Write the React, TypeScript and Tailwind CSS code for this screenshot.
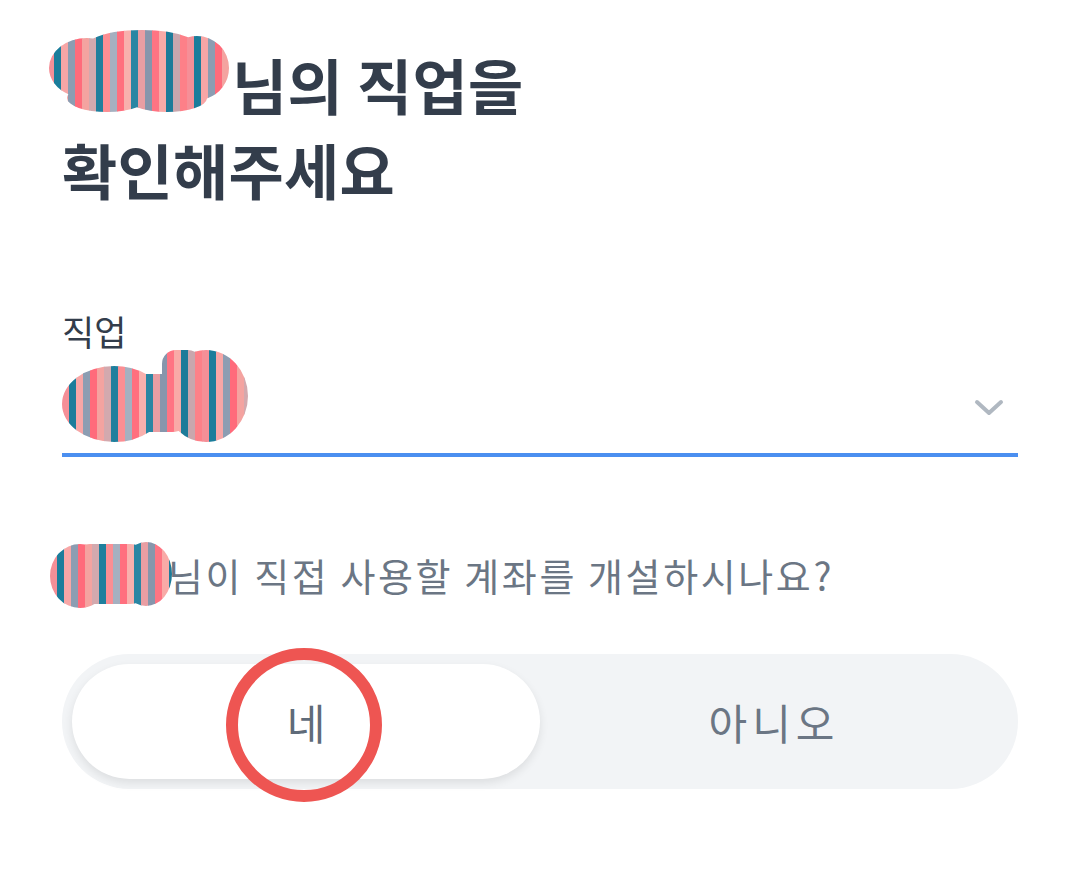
import React from "react";

const STRIPES = [
  "#f58f97", "#1b7d9b", "#f7a6a6", "#8c9db2", "#ff6b7b", "#f4a3a0", "#d3a9ae",
  "#1f7f9d", "#fb8e93", "#a5b0c0", "#ff6f7e", "#f8b0ad", "#2a86a3", "#e99ea3",
  "#8796ac", "#ff7483", "#f9aaa7", "#1d7b99", "#c9a6ad", "#fd8088",
];

function Scribble({ id, w, h, shape }: { id: string; w: number; h: number; shape: React.ReactNode }) {
  const n = Math.ceil(w / 7) + 1;
  return (
    <svg width={w} height={h} viewBox={`0 0 ${w} ${h}`} className="block">
      <defs>
        <clipPath id={id}>{shape}</clipPath>
      </defs>
      <g clipPath={`url(#${id})`}>
        {Array.from({ length: n }).map((_, i) => (
          <rect key={i} x={i * 7} y={0} width={7.5} height={h} fill={STRIPES[i % STRIPES.length]} />
        ))}
      </g>
    </svg>
  );
}

export default function App() {
  return (
    <div
      className="w-[1076px] h-[895px] bg-white overflow-hidden pl-[62px] pr-[58px]"
      style={{ fontFamily: '"Noto Sans CJK KR", "Noto Sans", sans-serif' }}
    >
      <h1 className="relative mt-[41px] text-[60px] leading-[85px] font-bold text-[#333d4b] tracking-[0.3px]">
        <span className="absolute left-[-15px] top-[-13px]">
          <Scribble
            id="s1"
            w={185}
            h={86}
            shape={
              <>
                <ellipse cx="40" cy="40" rx="38" ry="30" />
                <rect x="14" y="12" width="150" height="62" rx="26" />
                <ellipse cx="150" cy="40" rx="32" ry="32" />
                <ellipse cx="95" cy="22" rx="60" ry="20" />
                <ellipse cx="60" cy="70" rx="40" ry="14" />
                <ellipse cx="120" cy="70" rx="40" ry="14" />
              </>
            }
          />
        </span>
        <span className="inline-block w-[170px]" />
        님의 직업을
        <br />
        확인해주세요
      </h1>

      <div className="mt-[99px]">
        <div className="text-[35px] leading-[42px] text-[#333d4b]">직업</div>
        <div className="flex items-center justify-between h-[105px] border-b-[4px] border-[#4b8ff0] pr-[14px]">
          <div className="self-start -mt-[2px]">
            <Scribble
              id="s2"
              w={186}
              h={92}
              shape={
                <>
                  <ellipse cx="52" cy="54" rx="52" ry="38" />
                  <rect x="40" y="24" width="90" height="58" rx="20" />
                  <rect x="100" y="0" width="40" height="70" rx="14" />
                  <ellipse cx="144" cy="46" rx="42" ry="46" />
                </>
              }
            />
          </div>
          <svg width="30" height="18" viewBox="0 0 30 18" className="mt-[10px]">
            <path d="M3 3 L15 14 L27 3" fill="none" stroke="#b0b8c1" strokeWidth="4" strokeLinecap="round" strokeLinejoin="round" />
          </svg>
        </div>
      </div>

      <div className="relative mt-[93px] flex items-center text-[38px] leading-[50px] text-[#6b7684] tracking-[2.6px]">
        <span className="absolute left-[-12px] top-[-10px]">
          <Scribble
            id="s3"
            w={124}
            h={70}
            shape={
              <>
                <ellipse cx="30" cy="36" rx="30" ry="32" />
                <rect x="14" y="4" width="92" height="60" rx="26" />
                <ellipse cx="96" cy="34" rx="26" ry="32" />
              </>
            }
          />
        </span>
        <span className="inline-block w-[106px] h-[50px]" />
        <span>님이 직접 사용할 계좌를 개설하시나요?</span>
      </div>

      <div className="relative mt-[54px] h-[135px] rounded-full bg-[#f2f4f6] p-[10px] grid grid-cols-2">
        <div className="rounded-full bg-white shadow-[0_4px_10px_rgba(0,0,0,0.09)] flex items-center justify-center text-[42px] text-[#5f6b79]">
          네
        </div>
        <div className="flex items-center justify-center text-[42px] text-[#6b7684] tracking-[5px]">아니오</div>
        <svg
          width="170"
          height="166"
          viewBox="0 0 170 166"
          className="absolute left-[158px] top-[-9px] pointer-events-none"
        >
          <ellipse cx="84" cy="80" rx="72" ry="71" fill="none" stroke="#ee5552" strokeWidth="12" />
        </svg>
      </div>
    </div>
  );
}
